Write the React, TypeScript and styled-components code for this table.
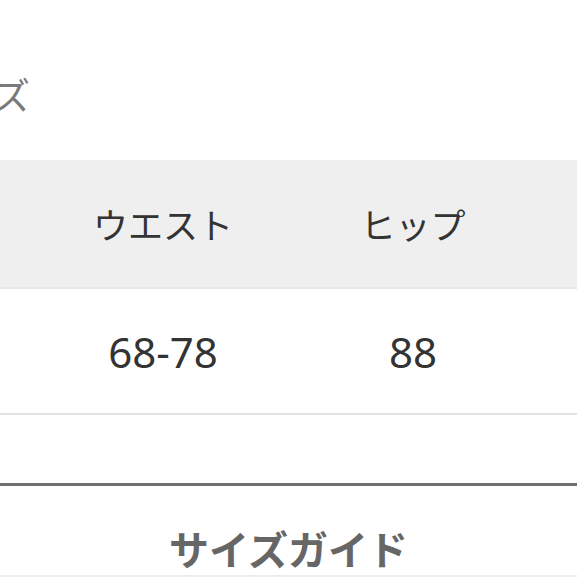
import React from 'react';
import styled, { createGlobalStyle } from 'styled-components';

const GlobalStyle = createGlobalStyle`
  html, body {
    margin: 0;
    padding: 0;
    background: #ffffff;
    overflow: hidden;
  }
  body {
    font-family: "Noto Sans CJK JP", "Noto Sans", sans-serif;
  }
`;

const Page = styled.div`
  width: 577px;
  height: 577px;
  overflow: hidden;
  background: #ffffff;
  display: flex;
  flex-direction: column;
  & > * {
    flex-shrink: 0;
  }
`;

const SectionTitle = styled.h2`
  margin: 0;
  padding-top: 68px;
  margin-left: -80px;
  height: 160px;
  box-sizing: border-box;
  font-size: 37px;
  line-height: 52px;
  font-weight: 400;
  color: #7a7a7a;
  white-space: nowrap;
`;

const Table = styled.div`
  margin-left: -212px;
  width: 1000px;
  display: flex;
  flex-direction: column;
`;

const Row = styled.div<{ $head?: boolean }>`
  display: grid;
  grid-template-columns: 250px 250px 250px 250px;
  height: ${p => (p.$head ? '127px' : '124px')};
  background: ${p => (p.$head ? '#efefef' : '#ffffff')};
  border-bottom: 2px solid ${p => (p.$head ? '#e7e7e7' : '#e2e2e2')};
`;

const Cell = styled.div<{ $num?: boolean }>`
  display: flex;
  align-items: center;
  justify-content: center;
  font-size: ${p => (p.$num ? '42px' : '35px')};
  font-family: ${p =>
    p.$num
      ? '"Noto Sans", "Noto Sans CJK JP", sans-serif'
      : '"Noto Sans CJK JP", sans-serif'};
  color: #333333;
  font-weight: 400;
`;

const Divider = styled.div`
  margin-top: 68px;
  height: 3px;
  background: #707070;
`;

const GuideButton = styled.div`
  flex: 1 0 auto;
  display: flex;
  align-items: flex-end;
  justify-content: center;
  padding-bottom: 2px;
  border-bottom: 2px solid #ececec;
  font-size: 40px;
  line-height: 50px;
  font-weight: 700;
  color: #666666;
`;

const App: React.FC = () => {
  const heads = ['', 'ウエスト', 'ヒップ', ''];
  const values = ['', '68-78', '88', ''];

  return (
    <>
      <GlobalStyle />
      <Page>
        <SectionTitle>サイズ</SectionTitle>
        <Table>
          <Row $head>
            {heads.map((h, i) => (
              <Cell key={i}>{h}</Cell>
            ))}
          </Row>
          <Row>
            {values.map((v, i) => (
              <Cell key={i} $num>
                {v}
              </Cell>
            ))}
          </Row>
        </Table>
        <Divider />
        <GuideButton>サイズガイド</GuideButton>
      </Page>
    </>
  );
};

export default App;
